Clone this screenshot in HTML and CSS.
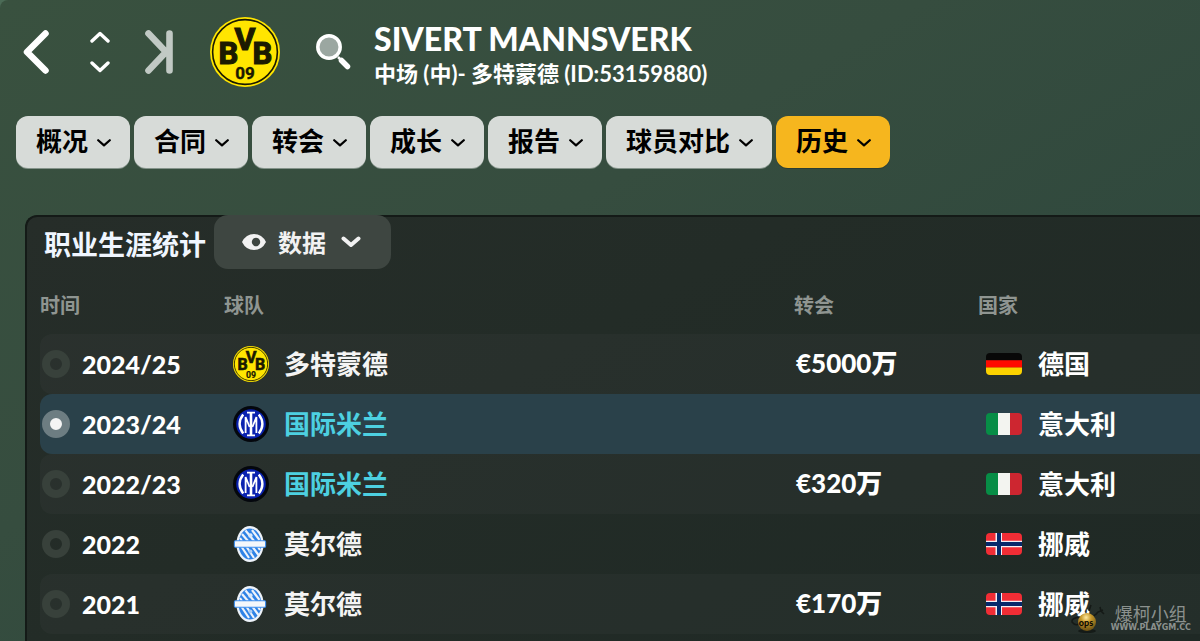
FILE: index.html
```
<!DOCTYPE html>
<html lang="zh-CN">
<head>
    <meta charset="UTF-8">
    <meta name="viewport" content="width=device-width, initial-scale=1.0">
    <title>Sivert Mannsverk</title>
    <link rel="stylesheet" href="styles.css">
</head>
<body>

    <!-- Shared icons -->
    <svg class="sprite" aria-hidden="true">
        <symbol id="chevron" viewBox="0 0 14 8">
            <path d="M1.2 1.2 L7 6.4 L12.8 1.2" fill="none" stroke="currentColor" stroke-width="2.2" stroke-linecap="round" stroke-linejoin="round"/>
        </symbol>
        <symbol id="bvb" viewBox="0 0 70 70">
            <circle cx="35" cy="35" r="35" fill="#ffe500"/>
            <circle cx="35" cy="35" r="32.4" fill="none" stroke="#1b1a00" stroke-width="1.6"/>
            <g class="crest-text" fill="#1b1a00" stroke="#1b1a00" stroke-width="1.2" text-anchor="middle">
                <text x="18.5" y="47" font-size="31">B</text>
                <text x="35" y="33" font-size="32">V</text>
                <text x="52.5" y="47" font-size="31">B</text>
                <text x="35" y="61.5" font-size="17" stroke-width="0.4">09</text>
            </g>
        </symbol>
        <symbol id="inter" viewBox="0 0 36 36">
            <circle cx="18" cy="18" r="18" fill="#04070d"/>
            <circle cx="18" cy="18" r="14.8" fill="#0a22b0"/>
            <g fill="none" stroke="#fff">
                <path d="M18 7v22" stroke-width="2.6"/>
                <path d="M14 6.6h8M14 29.4h8" stroke-width="1.8"/>
                <path d="M12.6 27V11L16.6 21M23.4 27V11L19.4 21" stroke-width="1.8"/>
                <path d="M10.2 8.6Q3 18 10.2 27.4M25.8 8.6Q33 18 25.8 27.4" stroke-width="2.4"/>
            </g>
        </symbol>
        <symbol id="molde" viewBox="0 0 36 36">
            <ellipse cx="17" cy="18" rx="13.6" ry="18" fill="#eef3fa"/>
            <ellipse cx="17" cy="18" rx="11.4" ry="15.6" fill="#2f83e6"/>
            <path d="M9 8l6 7M12.5 4.5l9 11M19 4l7.5 10M8 20l8 12M13 20l8 12M19 20l6.5 9M7 12l2 3M25 21l2 3" stroke="#eef3fa" stroke-width="2.2" fill="none"/>
            <circle cx="17.4" cy="9.5" r="2.2" fill="#dbe9fa"/>
            <circle cx="17.4" cy="25.5" r="2" fill="#a9cdf6"/>
            <rect x="1.4" y="14.8" width="31.2" height="6.4" rx="1" fill="#f4f7fb" stroke="#3f8fee" stroke-width="1.1"/>
        </symbol>
        <symbol id="germany" viewBox="0 0 36 22">
            <path d="M0 0h36v7.4H0z" fill="#080808"/>
            <path d="M0 7.3h36v7.4H0z" fill="#ff0a00"/>
            <path d="M0 14.6h36V22H0z" fill="#fbd200"/>
        </symbol>
        <symbol id="italy" viewBox="0 0 36 22">
            <path d="M0 0h12v22H0z" fill="#078d46"/>
            <path d="M12 0h12v22H12z" fill="#f3f4f0"/>
            <path d="M24 0h12v22H24z" fill="#cd2630"/>
        </symbol>
        <symbol id="norway" viewBox="0 0 36 22">
            <path d="M0 0h36v22H0z" fill="#f12d35"/>
            <path d="M9.5 0H16v22H9.5zM0 7.8h36v6.4H0z" fill="#f1eef4"/>
            <path d="M11 0h4v22h-4zM0 9h36v4H0z" fill="#06286b"/>
        </symbol>
    </svg>

    <div class="app">
        <header class="player">
            <button class="nav-btn back" aria-label="返回">
                <svg width="26" height="44" viewBox="0 0 26 44"><path d="M22.5 3.5L4 22l18.5 18.5" fill="none" stroke="#fff" stroke-width="6.5" stroke-linecap="round" stroke-linejoin="round"/></svg>
            </button>
            <button class="nav-btn step" aria-label="切换球员">
                <svg width="20" height="42" viewBox="0 0 20 42"><path d="M2 10l8-7.5L18 10M2 32l8 7.5L18 32" fill="none" stroke="#fff" stroke-width="3.4" stroke-linecap="round" stroke-linejoin="round"/></svg>
            </button>
            <button class="nav-btn last" aria-label="最后">
                <svg width="28" height="44" viewBox="0 0 28 44"><path d="M3.5 3.5L21 22L3.5 40.5M24.5 3.5v37" fill="none" stroke="#c1c9c4" stroke-width="6.6" stroke-linecap="round" stroke-linejoin="round"/></svg>
            </button>
            <svg class="club-logo" role="img" aria-label="多特蒙德"><use href="#bvb"/></svg>
            <button class="nav-btn search" aria-label="搜索">
                <svg width="36" height="36" viewBox="0 0 36 36">
                    <circle cx="14" cy="13" r="11.2" fill="#9ba7a1" stroke="#fff" stroke-width="3.5"/>
                    <path d="M23 23l3 3" stroke="#fff" stroke-width="2.5"/>
                    <path d="M26.5 26.5l6 6" stroke="#fff" stroke-width="5.5" stroke-linecap="round"/>
                </svg>
            </button>
            <div class="player-info">
                <h1>SIVERT MANNSVERK</h1>
                <p>中场 (中)- 多特蒙德 (ID:53159880)</p>
            </div>
        </header>

        <nav class="tabs">
            <button class="tab">概况<svg><use href="#chevron"/></svg></button>
            <button class="tab">合同<svg><use href="#chevron"/></svg></button>
            <button class="tab">转会<svg><use href="#chevron"/></svg></button>
            <button class="tab">成长<svg><use href="#chevron"/></svg></button>
            <button class="tab">报告<svg><use href="#chevron"/></svg></button>
            <button class="tab">球员对比<svg><use href="#chevron"/></svg></button>
            <button class="tab active">历史<svg><use href="#chevron"/></svg></button>
        </nav>

        <section class="panel">
            <div class="panel-head">
                <h2>职业生涯统计</h2>
                <button class="view-btn">
                    <svg width="24" height="16" viewBox="0 0 24 16"><path fill="#f2f2f2" fill-rule="evenodd" d="M0 8Q4 0 12 0T24 8Q20 16 12 16T0 8zM14 3.8a4.2 4.2 0 1 0 .01 0z"/></svg>
                    数据
                    <svg width="20" height="12" viewBox="0 0 20 12"><path d="M2.5 2.5L10 9l7.5-6.5" fill="none" stroke="#f2f2f2" stroke-width="4" stroke-linecap="round" stroke-linejoin="round"/></svg>
                </button>
            </div>

            <table class="history">
                <thead>
                    <tr>
                        <th class="col-time">时间</th>
                        <th>球队</th>
                        <th class="col-fee">转会</th>
                        <th class="col-nation">国家</th>
                    </tr>
                </thead>
                <tbody>
                    <tr>
                        <td><label class="season"><input type="radio" name="season">2024/25</label></td>
                        <td><div class="team"><svg class="crest"><use href="#bvb"/></svg>多特蒙德</div></td>
                        <td class="fee">€5000万</td>
                        <td><div class="nation"><svg class="flag"><use href="#germany"/></svg>德国</div></td>
                    </tr>
                    <tr class="selected">
                        <td><label class="season"><input type="radio" name="season" checked>2023/24</label></td>
                        <td><div class="team"><svg class="crest"><use href="#inter"/></svg><a href="#">国际米兰</a></div></td>
                        <td class="fee"></td>
                        <td><div class="nation"><svg class="flag"><use href="#italy"/></svg>意大利</div></td>
                    </tr>
                    <tr>
                        <td><label class="season"><input type="radio" name="season">2022/23</label></td>
                        <td><div class="team"><svg class="crest"><use href="#inter"/></svg><a href="#">国际米兰</a></div></td>
                        <td class="fee">€320万</td>
                        <td><div class="nation"><svg class="flag"><use href="#italy"/></svg>意大利</div></td>
                    </tr>
                    <tr>
                        <td><label class="season"><input type="radio" name="season">2022</label></td>
                        <td><div class="team"><svg class="crest"><use href="#molde"/></svg>莫尔德</div></td>
                        <td class="fee"></td>
                        <td><div class="nation"><svg class="flag"><use href="#norway"/></svg>挪威</div></td>
                    </tr>
                    <tr>
                        <td><label class="season"><input type="radio" name="season">2021</label></td>
                        <td><div class="team"><svg class="crest"><use href="#molde"/></svg>莫尔德</div></td>
                        <td class="fee">€170万</td>
                        <td><div class="nation"><svg class="flag"><use href="#norway"/></svg>挪威</div></td>
                    </tr>
                </tbody>
            </table>
        </section>

        <!-- Site badge -->
        <div class="badge">
            <svg width="36" height="30" viewBox="0 0 36 30">
                <defs>
                    <radialGradient id="ball" cx="0.45" cy="0.25" r="0.8">
                        <stop offset="0" stop-color="#ffe9a0"/>
                        <stop offset="0.35" stop-color="#c79a2c"/>
                        <stop offset="1" stop-color="#5f4710"/>
                    </radialGradient>
                </defs>
                <path d="M23 13q3-1 5-4l5-2M30 4l1 4 3 3M10 14q-9 1-8 5 3 4 7 2M19 8l2-6" fill="none" stroke="#141916" stroke-width="1.5"/>
                <ellipse cx="17" cy="28" rx="9" ry="2" fill="#151b18"/>
                <circle cx="17" cy="19" r="9" fill="url(#ball)"/>
                <text class="ball-text" x="16" y="23" text-anchor="middle">ops</text>
            </svg>
            <div class="badge-text">
                <span class="badge-name">爆柯小组</span>
                <span class="badge-url">WWW.PLAYGM.CC</span>
            </div>
        </div>
    </div>

</body>
</html>
```
FILE: styles.css
```
* {
    box-sizing: border-box;
}
body {
    margin: 0;
    background: #4b6b56;
    color: #fff;
    font-family: Lato, "Noto Sans CJK SC", sans-serif;
    font-weight: 700;
    overflow: hidden;
}
button {
    font: inherit;
    border: none;
    cursor: pointer;
}
svg {
    display: block;
    flex-shrink: 0;
}
.sprite {
    display: none;
}
.app {
    min-height: 100vh;
    padding-top: 17px;
    border-top-left-radius: 8px;
    background: linear-gradient(150deg, #39513f 0%, #364d3f 40%, #2f483d 75%, #2f453c 100%);
}

/* Player header */
.player {
    display: flex;
    align-items: center;
    height: 70px;
    padding-left: 23px;
}
.nav-btn {
    padding: 0;
    background: none;
}
.step {
    margin-left: 41px;
}
.last {
    margin-left: 35px;
}
.club-logo {
    width: 70px;
    height: 70px;
    margin-left: 37px;
}
.search {
    margin-left: 35px;
}
.crest-text {
    font-family: Roboto, sans-serif;
    font-weight: 700;
}
.player-info {
    margin-left: 23px;
    padding-top: 3px;
    white-space: nowrap;
}
.player-info h1 {
    margin: 0;
    font-size: 32px;
    line-height: 40px;
    font-weight: 900;
}
.player-info p {
    margin: 0;
    font-size: 22px;
    line-height: 30px;
}

/* Tabs */
.tabs {
    display: flex;
    gap: 4px;
    margin-top: 29px;
    padding-left: 16px;
}
.tab {
    display: flex;
    align-items: center;
    gap: 9px;
    height: 52px;
    padding: 0 19px 2px 20px;
    border-radius: 12px;
    background: #d7dbd8;
    box-shadow: 0 1px 0 #84938a;
    color: #000;
    font-size: 26px;
    line-height: 50px;
    white-space: nowrap;
}
.tab svg {
    width: 14px;
    height: 8px;
    margin-top: 4px;
}
.tab.active {
    background: #f6b61e;
    box-shadow: 0 1px 0 #2a3d34;
}

/* Career panel */
.panel {
    margin: 47px 0 0 25px;
    padding-left: 13px;
    min-height: calc(100vh - 215px);
    border-top: 2px solid #141a17;
    border-left: 2px solid #141a17;
    border-top-left-radius: 12px;
    background: linear-gradient(150deg, #262d29 0%, #232c27 40%, #1f2925 100%);
}
.panel-head {
    display: flex;
    align-items: center;
    gap: 8px;
    margin-top: -2px;
    padding-left: 4px;
}
.panel-head h2 {
    margin: 0;
    padding-top: 5px;
    color: #f0f6ff;
    font-size: 27px;
    line-height: 40px;
}
.view-btn {
    display: flex;
    align-items: center;
    gap: 12px;
    height: 54px;
    padding: 0 30px 2px 28px;
    border-radius: 14px;
    background: #3e4641;
    color: #f2f2f2;
    font-size: 24px;
}
.view-btn svg {
    margin-top: 2px;
}
.view-btn svg:last-child {
    margin-left: 3px;
}

/* History table */
.history {
    width: 100%;
    border-collapse: separate;
    border-spacing: 0;
    table-layout: fixed;
}
.history th {
    padding: 24px 0 17px;
    color: #8f9591;
    font-size: 20px;
    line-height: 24px;
    text-align: left;
}
.col-time,
.col-fee {
    width: 184px;
}
.col-nation {
    width: 222px;
}
.history td {
    height: 60px;
    padding: 0;
    font-size: 26px;
    line-height: 36px;
    white-space: nowrap;
}
.history td:first-child {
    border-radius: 12px 0 0 12px;
}
.history tbody tr:nth-child(odd) td {
    background: rgba(255, 255, 255, 0.025);
}
.history tbody tr.selected td {
    background: #2a414a;
}
.season {
    display: flex;
    align-items: center;
    gap: 12px;
    padding-left: 2px;
    font-size: 25px;
    font-weight: 900;
}
.season input {
    appearance: none;
    width: 28px;
    height: 28px;
    margin: 0;
    border: 8px solid #38413b;
    border-radius: 50%;
}
.season input:checked {
    border-color: #6d7d82;
    background: #f4f4f4;
}
.team {
    display: flex;
    align-items: center;
    gap: 15px;
    padding-left: 9px;
    color: #f4f4f4;
}
.team a {
    color: #4dd0e1;
    text-decoration: none;
}
.crest {
    width: 36px;
    height: 36px;
}
.fee {
    font-weight: 900;
}
.history .fee {
    padding: 0 0 2px 2px;
}
.nation {
    display: flex;
    align-items: center;
    gap: 16px;
    padding-left: 8px;
}
.flag {
    width: 36px;
    height: 22px;
    border-radius: 4px;
}

/* Badge in the corner, over the table */
.badge {
    position: absolute;
    right: 9px;
    bottom: 8px;
    display: flex;
    align-items: center;
    gap: 5px;
    color: #8b918e;
}
.badge-text {
    display: flex;
    flex-direction: column;
    align-items: center;
}
.badge-name {
    font-size: 18px;
    font-weight: 400;
    line-height: 20px;
}
.badge-url {
    font-family: "DejaVu Sans", sans-serif;
    font-size: 8px;
    line-height: 8px;
}
.ball-text {
    fill: #0c0a02;
    font-size: 9px;
    font-weight: 900;
}
```
